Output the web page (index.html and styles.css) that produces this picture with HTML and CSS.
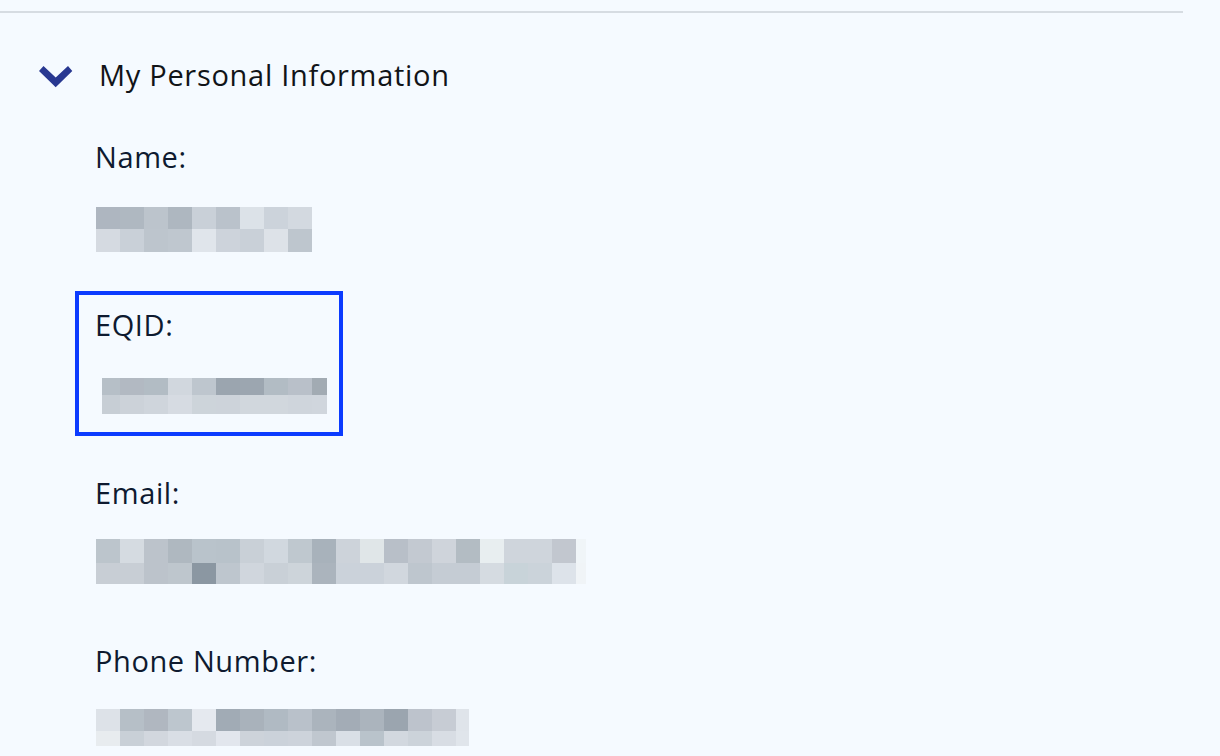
FILE: index.html
```
<!DOCTYPE html>
<html>

<head>
  <title>My Personal Information</title>
  <meta charset="utf-8">
  <link rel="stylesheet" href="styles.css">
</head>

<body>
  <div class="rule"></div>
  <div class="section-head">
    <svg class="chevron" width="34" height="23" viewBox="0 0 34 23">
      <polygon points="0,6 4.5,1 16.7,12.5 29,1 33.3,6 16.7,22.3" fill="#283891" />
    </svg>
    <span class="section-title">My Personal Information</span>
  </div>
  <div class="fields">
    <div class="field">
      <div class="label">Name:</div>
      <div class="value"><div class="pixels pixels-name" data-key="name"></div></div>
    </div>
    <div class="field field-active">
      <div class="label">EQID:</div>
      <div class="value"><div class="pixels pixels-eqid" data-key="eqid"></div></div>
    </div>
    <div class="field">
      <div class="label">Email:</div>
      <div class="value"><div class="pixels pixels-email" data-key="email"></div></div>
    </div>
    <div class="field">
      <div class="label">Phone Number:</div>
      <div class="value"><div class="pixels pixels-phone" data-key="phone"></div></div>
    </div>
  </div>
  <script type="text/javascript">
  // blurred values, drawn as blocks of colour
  var pix = {
    name: {
      cols: [24, 24, 24, 24, 24, 24, 24, 24, 24],
      rows: [22, 23],
      colors: [
        ['#aeb6c0', '#afb8c1', '#bcc4cc', '#aeb7c0', '#c9d0d8', '#bac2cb', '#dce2e8', '#ccd3db', '#d3d9e0'],
        ['#d5dae1', '#c9d0d8', '#bdc5cd', '#bfc7cf', '#e0e5eb', '#cdd3db', '#c9d0d8', '#dde2e8', '#bec6ce']
      ]
    },
    eqid: {
      cols: [18, 24, 24, 24, 24, 24, 24, 24, 24, 15],
      rows: [17, 19],
      colors: [
        ['#b6bfc7', '#b2b9c2', '#b2bcc4', '#d1d7de', '#bec6ce', '#9ba5af', '#9ca6b0', '#b2bcc4', '#b9c0c9', '#a2abb3'],
        ['#c7ced5', '#ccd2d9', '#cfd5dc', '#d6dbe2', '#cdd4da', '#cdd3da', '#d1d7dd', '#d1d7dd', '#cfd5dc', '#d0d6dd']
      ]
    },
    email: {
      cols: [24, 24, 24, 24, 24, 24, 24, 24, 24, 24, 24, 24, 24, 24, 24, 24, 24, 24, 24, 24, 10],
      rows: [24, 21],
      colors: [
        ['#bcc5cc', '#d5dbe1', '#bcc3cb', '#afb8c0', '#b9c3cb', '#b8c2ca', '#c9d0d7', '#d1d8df', '#bfc8cf', '#a8b2bb', '#cdd3da',
          '#e0e6e8', '#b8bfc8', '#c3c9d1', '#cfd4db', '#b3bcc3', '#e8eef0', '#cfd5dc', '#cfd5dc', '#c2c7cf', '#f0f5f8'],
        ['#c8ced5', '#c8ced5', '#bcc3cb', '#bec6cd', '#8b97a2', '#bec6ce', '#d0d6dd', '#c9d0d7', '#cdd4da', '#abb4bd', '#cbd2da',
          '#cbd2da', '#d1d7de', '#bec6ce', '#c5ccd4', '#c5ccd4', '#d5dbe1', '#c8d3d9', '#cbd3da', '#dde3ea', '#f0f4f7']
      ]
    },
    phone: {
      cols: [24, 24, 24, 24, 24, 24, 24, 24, 24, 24, 24, 24, 24, 24, 24, 13],
      rows: [22, 15],
      colors: [
        ['#dde2e8', '#b6bfc7', '#b0b7c0', '#bdc6ce', '#e5e9ef', '#a1abb5', '#a9b2bb', '#b0bac3', '#b9c1ca', '#abb4bd', '#a3acb6',
          '#abb4bd', '#9ba5af', '#bdc3cc', '#c7ccd4', '#dfe4ea'],
        ['#e8ecef', '#c9d0d7', '#d2d7de', '#d9dee5', '#d5dae1', '#e2e6ed', '#cdd3da', '#cbd2da', '#cdd3db', '#c0c7cf', '#d9dfe6',
          '#b9c3cb', '#d2d8df', '#ccd3da', '#d8dde4', '#e0e5eb']
      ]
    }
  };

  var boxes = document.querySelectorAll('.pixels');
  for (var b = 0; b < boxes.length; b++) {
    var box = boxes[b];
    var data = pix[box.getAttribute('data-key')];
    box.style.gridTemplateColumns = data.cols.join('px ') + 'px';
    box.style.gridTemplateRows = data.rows.join('px ') + 'px';
    for (var r = 0; r < data.rows.length; r++) {
      for (var c = 0; c < data.cols.length; c++) {
        var cell = document.createElement('span');
        cell.style.background = data.colors[r][c];
        box.appendChild(cell);
      }
    }
  }
  </script>
</body>

</html>
```

FILE: styles.css
```
* {
  padding: 0;
  margin: 0;
  box-sizing: border-box;
}

body {
  background: #f5faff;
  font-family: "Open Sans", "Noto Sans", sans-serif;
  color: #0e1a30;
}

.rule {
  width: 1183px;
  height: 2px;
  margin-top: 11px;
  background: #d6dce2;
}

.section-head {
  display: flex;
  align-items: center;
  margin-top: 44px;
  padding-left: 39px;
  height: 36px;
}

.chevron {
  display: block;
  margin-top: 3px;
}

.section-title {
  margin-left: 26px;
  font-size: 29px;
  line-height: 36px;
  letter-spacing: 0.7px;
  color: #111418;
}

.fields {
  display: flex;
  flex-direction: column;
  align-items: flex-start;
  gap: 23px;
  margin-top: 30px;
  padding-left: 75px;
}

.field {
  border: 4px solid transparent;
  padding: 12px 10px 16px 16px;
  height: 145px;
}

.field-active {
  width: 268px;
  border-color: #0b3bff;
}

.label {
  font-size: 29px;
  line-height: 36px;
  letter-spacing: 0.6px;
}

.value {
  display: flow-root;
  margin-top: 30px;
  height: 43px;
}

.pixels {
  display: grid;
  width: max-content;
}

.pixels-name {
  margin-top: 2px;
  margin-left: 1px;
}

.pixels-eqid {
  margin-top: 5px;
  margin-left: 7px;
}

.pixels-email {
  margin-top: -2px;
  margin-left: 1px;
}

.pixels-phone {
  margin-left: 1px;
}
```
